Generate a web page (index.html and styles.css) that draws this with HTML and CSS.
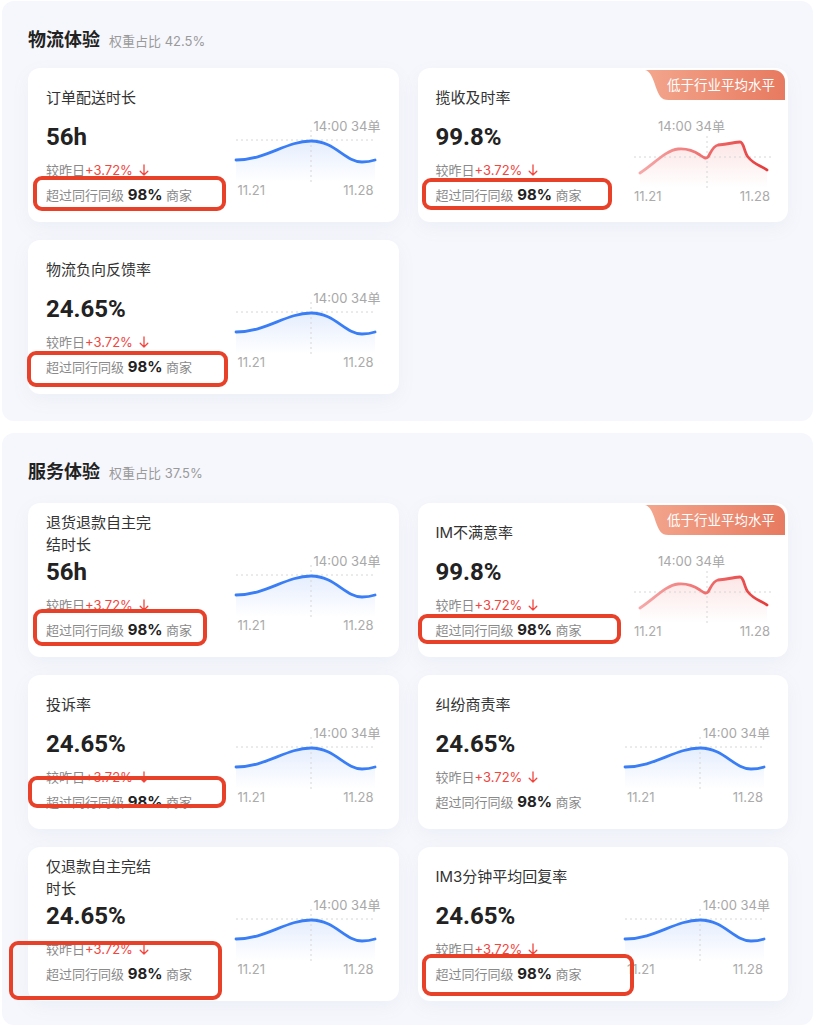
FILE: index.html
```html
<!DOCTYPE html>
<html lang="zh-CN">
<head>
<meta charset="utf-8">
<title>体验指标</title>
<link rel="stylesheet" href="styles.css">
</head>
<body>
<svg class="defs" width="0" height="0" aria-hidden="true">
  <defs>
    <linearGradient id="blueArea" x1="0" y1="0" x2="0" y2="1">
      <stop offset="0" stop-color="#5a8ff5" stop-opacity="0.16"/>
      <stop offset="1" stop-color="#5a8ff5" stop-opacity="0"/>
    </linearGradient>
    <linearGradient id="redArea" x1="0" y1="0" x2="0" y2="1">
      <stop offset="0" stop-color="#f07070" stop-opacity="0.18"/>
      <stop offset="1" stop-color="#f07070" stop-opacity="0"/>
    </linearGradient>
    <linearGradient id="redLine" x1="0" y1="0" x2="1" y2="0">
      <stop offset="0" stop-color="#f7a9a9"/>
      <stop offset="0.55" stop-color="#ee6a6a"/>
      <stop offset="1" stop-color="#e63b3b"/>
    </linearGradient>
    <linearGradient id="badgeFill" x1="0" y1="0" x2="1" y2="0">
      <stop offset="0" stop-color="#f3a68d"/>
      <stop offset="1" stop-color="#e77a60"/>
    </linearGradient>
  </defs>
</svg>

<div class="page">
  <section class="panel">
    <div class="panel-head"><h2 class="panel-title">物流体验</h2><span class="panel-weight">权重占比 42.5%</span></div>
    <div class="grid">

      <div class="card">
        <div class="info">
          <div class="name">订单配送时长</div>
          <div class="value">56h</div>
          <div class="delta">较昨日<span class="up">+3.72%</span><svg class="arrow" viewBox="0 0 10 12"><path d="M5 1V11M1.2 7.2L5 11L8.8 7.2"/></svg></div>
          <div class="rank">超过同行同级 <b>98%</b> 商家</div>
        </div>
        <div class="chart">
          <div class="tip">14:00 34单</div>
          <svg class="plot" viewBox="0 0 140 48"><path class="area-blue" d="M0 26C30 26 50 7 75 7C99 7 109 28 126 28C132 28 136 27 139 26L139 48L0 48Z"/><path class="grid-line" d="M0 6H140M75 -4V48"/><path class="line-blue" d="M0 26C30 26 50 7 75 7C99 7 109 28 126 28C132 28 136 27 139 26"/></svg>
          <div class="axis"><span>11.21</span><span>11.28</span></div>
        </div>
        <div class="mark m1"></div>
      </div>

      <div class="card">
        <div class="badge"><svg class="badge-bg" viewBox="0 0 143 32" preserveAspectRatio="none"><path d="M0 0H131A12 12 0 0 1 143 12V32H24C16 32 14 26 11 18C8 8 5 1 0 0Z"/></svg><span class="badge-text">低于行业平均水平</span></div>
        <div class="info">
          <div class="name">揽收及时率</div>
          <div class="value">99.8%</div>
          <div class="delta">较昨日<span class="up">+3.72%</span><svg class="arrow" viewBox="0 0 10 12"><path d="M5 1V11M1.2 7.2L5 11L8.8 7.2"/></svg></div>
          <div class="rank">超过同行同级 <b>98%</b> 商家</div>
        </div>
        <div class="chart chart-red">
          <div class="tip">14:00 34单</div>
          <svg class="plot" viewBox="0 0 136 54"><path class="area-red" d="M6 39C20 30 32 16 44 15C54 14 60 17 66 21C70 24 72 25 74 23C77 18 79 12 84 11C95 10 102 8 106 8C110 8 110 18 114 23C118 28 122 30 126 32C130 34 132 35 133 36L133 54L6 54Z"/><path class="grid-line" d="M0 23H138M73 2V54"/><path class="line-red" d="M6 39C20 30 32 16 44 15C54 14 60 17 66 21C70 24 72 25 74 23C77 18 79 12 84 11C95 10 102 8 106 8C110 8 110 18 114 23C118 28 122 30 126 32C130 34 132 35 133 36"/></svg>
          <div class="axis"><span>11.21</span><span>11.28</span></div>
        </div>
        <div class="mark m2"></div>
      </div>

      <div class="card">
        <div class="info">
          <div class="name">物流负向反馈率</div>
          <div class="value">24.65%</div>
          <div class="delta">较昨日<span class="up">+3.72%</span><svg class="arrow" viewBox="0 0 10 12"><path d="M5 1V11M1.2 7.2L5 11L8.8 7.2"/></svg></div>
          <div class="rank">超过同行同级 <b>98%</b> 商家</div>
        </div>
        <div class="chart">
          <div class="tip">14:00 34单</div>
          <svg class="plot" viewBox="0 0 140 48"><path class="area-blue" d="M0 26C30 26 50 7 75 7C99 7 109 28 126 28C132 28 136 27 139 26L139 48L0 48Z"/><path class="grid-line" d="M0 6H140M75 -4V48"/><path class="line-blue" d="M0 26C30 26 50 7 75 7C99 7 109 28 126 28C132 28 136 27 139 26"/></svg>
          <div class="axis"><span>11.21</span><span>11.28</span></div>
        </div>
        <div class="mark m3"></div>
      </div>

    </div>
  </section>

  <section class="panel panel-service">
    <div class="panel-head"><h2 class="panel-title">服务体验</h2><span class="panel-weight">权重占比 37.5%</span></div>
    <div class="grid">

      <div class="card card-wrap">
        <div class="info">
          <div class="name">退货退款自主完<br>结时长</div>
          <div class="value">56h</div>
          <div class="delta">较昨日<span class="up">+3.72%</span><svg class="arrow" viewBox="0 0 10 12"><path d="M5 1V11M1.2 7.2L5 11L8.8 7.2"/></svg></div>
          <div class="rank">超过同行同级 <b>98%</b> 商家</div>
        </div>
        <div class="chart">
          <div class="tip">14:00 34单</div>
          <svg class="plot" viewBox="0 0 140 48"><path class="area-blue" d="M0 26C30 26 50 7 75 7C99 7 109 28 126 28C132 28 136 27 139 26L139 48L0 48Z"/><path class="grid-line" d="M0 6H140M75 -4V48"/><path class="line-blue" d="M0 26C30 26 50 7 75 7C99 7 109 28 126 28C132 28 136 27 139 26"/></svg>
          <div class="axis"><span>11.21</span><span>11.28</span></div>
        </div>
        <div class="mark m4"></div>
      </div>

      <div class="card">
        <div class="badge"><svg class="badge-bg" viewBox="0 0 143 32" preserveAspectRatio="none"><path d="M0 0H131A12 12 0 0 1 143 12V32H24C16 32 14 26 11 18C8 8 5 1 0 0Z"/></svg><span class="badge-text">低于行业平均水平</span></div>
        <div class="info">
          <div class="name">IM不满意率</div>
          <div class="value">99.8%</div>
          <div class="delta">较昨日<span class="up">+3.72%</span><svg class="arrow" viewBox="0 0 10 12"><path d="M5 1V11M1.2 7.2L5 11L8.8 7.2"/></svg></div>
          <div class="rank">超过同行同级 <b>98%</b> 商家</div>
        </div>
        <div class="chart chart-red">
          <div class="tip">14:00 34单</div>
          <svg class="plot" viewBox="0 0 136 54"><path class="area-red" d="M6 39C20 30 32 16 44 15C54 14 60 17 66 21C70 24 72 25 74 23C77 18 79 12 84 11C95 10 102 8 106 8C110 8 110 18 114 23C118 28 122 30 126 32C130 34 132 35 133 36L133 54L6 54Z"/><path class="grid-line" d="M0 23H138M73 2V54"/><path class="line-red" d="M6 39C20 30 32 16 44 15C54 14 60 17 66 21C70 24 72 25 74 23C77 18 79 12 84 11C95 10 102 8 106 8C110 8 110 18 114 23C118 28 122 30 126 32C130 34 132 35 133 36"/></svg>
          <div class="axis"><span>11.21</span><span>11.28</span></div>
        </div>
        <div class="mark m5"></div>
      </div>

      <div class="card">
        <div class="info">
          <div class="name">投诉率</div>
          <div class="value">24.65%</div>
          <div class="delta">较昨日<span class="up">+3.72%</span><svg class="arrow" viewBox="0 0 10 12"><path d="M5 1V11M1.2 7.2L5 11L8.8 7.2"/></svg></div>
          <div class="rank">超过同行同级 <b>98%</b> 商家</div>
        </div>
        <div class="chart">
          <div class="tip">14:00 34单</div>
          <svg class="plot" viewBox="0 0 140 48"><path class="area-blue" d="M0 26C30 26 50 7 75 7C99 7 109 28 126 28C132 28 136 27 139 26L139 48L0 48Z"/><path class="grid-line" d="M0 6H140M75 -4V48"/><path class="line-blue" d="M0 26C30 26 50 7 75 7C99 7 109 28 126 28C132 28 136 27 139 26"/></svg>
          <div class="axis"><span>11.21</span><span>11.28</span></div>
        </div>
        <div class="mark m6"></div>
      </div>

      <div class="card">
        <div class="info">
          <div class="name">纠纷商责率</div>
          <div class="value">24.65%</div>
          <div class="delta">较昨日<span class="up">+3.72%</span><svg class="arrow" viewBox="0 0 10 12"><path d="M5 1V11M1.2 7.2L5 11L8.8 7.2"/></svg></div>
          <div class="rank">超过同行同级 <b>98%</b> 商家</div>
        </div>
        <div class="chart">
          <div class="tip">14:00 34单</div>
          <svg class="plot" viewBox="0 0 140 48"><path class="area-blue" d="M0 26C30 26 50 7 75 7C99 7 109 28 126 28C132 28 136 27 139 26L139 48L0 48Z"/><path class="grid-line" d="M0 6H140M75 -4V48"/><path class="line-blue" d="M0 26C30 26 50 7 75 7C99 7 109 28 126 28C132 28 136 27 139 26"/></svg>
          <div class="axis"><span>11.21</span><span>11.28</span></div>
        </div>
      </div>

      <div class="card card-wrap">
        <div class="info">
          <div class="name">仅退款自主完结<br>时长</div>
          <div class="value">24.65%</div>
          <div class="delta">较昨日<span class="up">+3.72%</span><svg class="arrow" viewBox="0 0 10 12"><path d="M5 1V11M1.2 7.2L5 11L8.8 7.2"/></svg></div>
          <div class="rank">超过同行同级 <b>98%</b> 商家</div>
        </div>
        <div class="chart">
          <div class="tip">14:00 34单</div>
          <svg class="plot" viewBox="0 0 140 48"><path class="area-blue" d="M0 26C30 26 50 7 75 7C99 7 109 28 126 28C132 28 136 27 139 26L139 48L0 48Z"/><path class="grid-line" d="M0 6H140M75 -4V48"/><path class="line-blue" d="M0 26C30 26 50 7 75 7C99 7 109 28 126 28C132 28 136 27 139 26"/></svg>
          <div class="axis"><span>11.21</span><span>11.28</span></div>
        </div>
        <div class="mark m7"></div>
      </div>

      <div class="card">
        <div class="info">
          <div class="name">IM3分钟平均回复率</div>
          <div class="value">24.65%</div>
          <div class="delta">较昨日<span class="up">+3.72%</span><svg class="arrow" viewBox="0 0 10 12"><path d="M5 1V11M1.2 7.2L5 11L8.8 7.2"/></svg></div>
          <div class="rank">超过同行同级 <b>98%</b> 商家</div>
        </div>
        <div class="chart">
          <div class="tip">14:00 34单</div>
          <svg class="plot" viewBox="0 0 140 48"><path class="area-blue" d="M0 26C30 26 50 7 75 7C99 7 109 28 126 28C132 28 136 27 139 26L139 48L0 48Z"/><path class="grid-line" d="M0 6H140M75 -4V48"/><path class="line-blue" d="M0 26C30 26 50 7 75 7C99 7 109 28 126 28C132 28 136 27 139 26"/></svg>
          <div class="axis"><span>11.21</span><span>11.28</span></div>
        </div>
        <div class="mark m8"></div>
      </div>

    </div>
  </section>
</div>
</body>
</html>
```

FILE: styles.css
```css
* { box-sizing: border-box; }

body {
  margin: 0;
  background: #ffffff;
  font-family: Inter, "Noto Sans CJK SC", sans-serif;
  color: #333;
}

.defs {
  position: absolute;
  width: 0;
  height: 0;
  overflow: hidden;
}

.page {
  padding: 1px 19px 8px 2px;
  display: flex;
  flex-direction: column;
  gap: 12px;
}

.panel {
  background: #f6f7fc;
  border-radius: 12px;
  padding: 27px 25px 27px 26px;
}

.panel-service {
  padding-bottom: 24px;
}

.panel-head {
  display: flex;
  align-items: baseline;
  height: 24px;
  margin-bottom: 16px;
}

.panel-service .panel-head {
  margin-bottom: 19px;
}

.panel-title {
  margin: 0;
  font-size: 18px;
  line-height: 24px;
  font-weight: 600;
  color: #222;
}

.panel-weight {
  margin-left: 9px;
  font-size: 13px;
  color: #9a9a9a;
}

.grid {
  display: grid;
  grid-template-columns: 1fr 1fr;
  column-gap: 19px;
  row-gap: 18px;
}

.card {
  position: relative;
  height: 154px;
  background: #ffffff;
  border-radius: 12px;
  padding: 0 23px 18px 18px;
  display: flex;
  justify-content: space-between;
  align-items: flex-end;
  box-shadow: 0 6px 18px rgba(120, 135, 190, 0.07);
}

.info {
  display: flex;
  flex-direction: column;
}

.name {
  font-size: 15px;
  line-height: 22px;
  color: #333;
}

.value {
  margin-top: 15px;
  font-family: Roboto, Inter, sans-serif;
  font-size: 24px;
  line-height: 26px;
  font-weight: 700;
  color: #222;
}

.card-wrap .value {
  margin-top: 3px;
}

.delta {
  margin-top: 12px;
  display: flex;
  align-items: center;
  font-size: 13px;
  line-height: 16px;
  color: #8a8a8a;
}

.up {
  color: #f2453e;
}

.arrow {
  width: 10px;
  height: 12px;
  margin-left: 6px;
  fill: none;
  stroke: #f2453e;
  stroke-width: 1.3;
  stroke-linecap: round;
  stroke-linejoin: round;
}

.rank {
  margin-top: 8px;
  font-size: 13px;
  line-height: 18px;
  color: #8a8a8a;
  white-space: nowrap;
}

.rank b {
  font-size: 15px;
  font-weight: 700;
  color: #222;
}

.chart {
  width: 140px;
  margin-bottom: 6px;
  display: flex;
  flex-direction: column;
}

.tip {
  font-size: 13px;
  line-height: 16px;
  color: #a8a8a8;
  text-align: right;
  margin-right: -5px;
  white-space: nowrap;
}

.plot {
  display: block;
  width: 100%;
  height: 48px;
  overflow: visible;
}

.axis {
  display: flex;
  justify-content: space-between;
  font-size: 13px;
  line-height: 16px;
  color: #ababab;
  padding: 0 2px 0 2px;
}

.grid-line {
  fill: none;
  stroke: #d6d6d6;
  stroke-width: 1;
  stroke-dasharray: 2 3;
}

.area-blue { fill: url(#blueArea); }
.area-red { fill: url(#redArea); }

.line-blue {
  fill: none;
  stroke: #3a7ef6;
  stroke-width: 2.8;
  stroke-linecap: round;
}

.line-red {
  fill: none;
  stroke: url(#redLine);
  stroke-width: 2.8;
  stroke-linecap: round;
  stroke-linejoin: round;
}

.chart-red {
  width: 136px;
  margin-right: -5px;
  margin-bottom: 0;
}

.chart-red .tip {
  text-align: left;
  margin: 0 0 0 24px;
}

.chart-red .plot {
  height: 54px;
}

.chart-red .axis {
  padding: 0;
}

.badge {
  position: absolute;
  top: 2px;
  right: 3px;
  width: 140px;
  height: 30px;
  display: flex;
  align-items: center;
  justify-content: center;
  padding-left: 12px;
  border-top-right-radius: 12px;
}

.badge-bg {
  position: absolute;
  inset: 0;
  width: 100%;
  height: 100%;
}

.badge-bg path { fill: url(#badgeFill); }

.badge-text {
  position: relative;
  font-size: 13.5px;
  line-height: 16px;
  color: #ffffff;
}

.mark {
  position: absolute;
  z-index: 2;
  border: 4px solid #e8412a;
  border-radius: 9px;
  pointer-events: none;
}

.m1 { left: 5px; top: 108px; width: 193px; height: 35px; }
.m2 { left: 4px; top: 110px; width: 190px; height: 32px; }
.m3 { left: -1px; top: 111px; width: 201px; height: 36px; }
.m4 { left: 5px; top: 106px; width: 174px; height: 37px; }
.m5 { left: 0; top: 111px; width: 203px; height: 30px; }
.m6 { left: 0; top: 101px; width: 198px; height: 32px; }
.m7 { left: -19px; top: 94px; width: 213px; height: 59px; }
.m8 { left: 4px; top: 107px; width: 212px; height: 42px; }
```
